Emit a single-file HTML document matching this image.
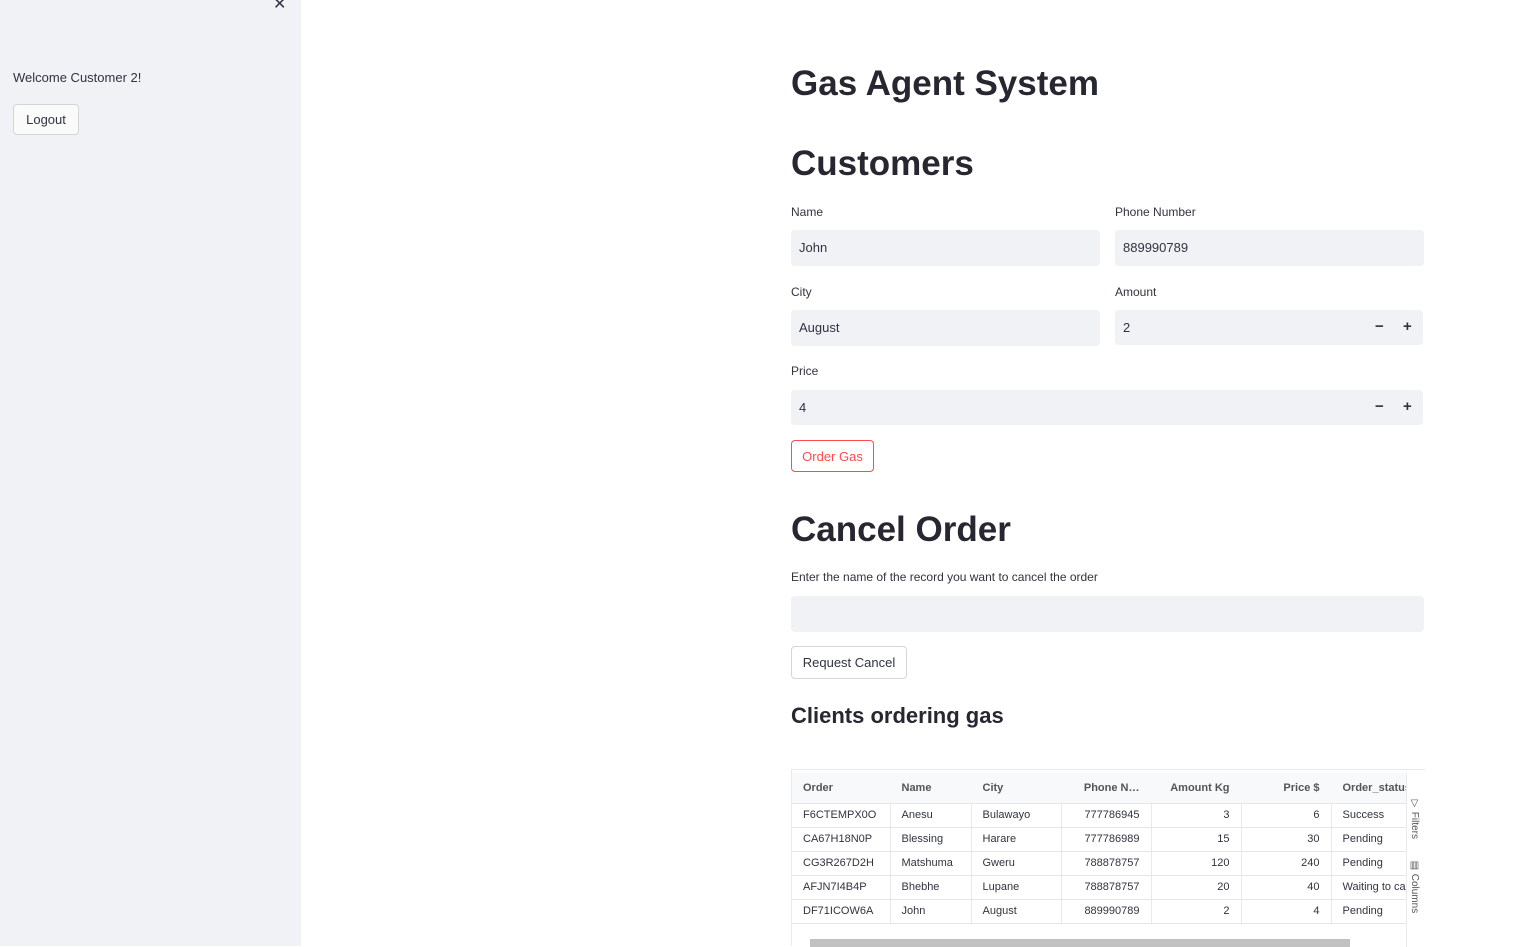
<!DOCTYPE html>
<html><head><style>
*{box-sizing:border-box;margin:0;padding:0}
body{width:1537px;height:946px;overflow:hidden;background:#fff;font-family:"Liberation Sans",sans-serif;color:#31333f;position:relative}
.side{position:absolute;left:0;top:0;width:301px;height:946px;background:#f0f2f6}
.abs{position:absolute}
.h1{font-weight:700;font-size:35px;color:#262730}
.lbl{font-size:12px;color:#31333f}
.inp{position:absolute;background:#f0f2f6;border-radius:4px;height:36px;font-size:13px;padding:10px 8px;color:#31333f}
.btn{position:absolute;border:1px solid #d5d6da;border-radius:4px;background:#fff;font-size:13px;display:flex;align-items:center;justify-content:center}
.pm{position:absolute;font-size:15px;font-weight:700;color:#31333f}
table{border-collapse:collapse;font-size:11px;table-layout:fixed}
td,th{height:24px;padding:0 11px;border-right:1px solid #e8e9ec;border-bottom:1px solid #e4e6ea;white-space:nowrap;overflow:hidden;color:#31333f}
th{height:30px;background:#f8f9fb;font-weight:700;text-align:left;color:#555;border-right:1px solid #f8f9fb}
.r{text-align:right}
</style></head><body>
<div class="side">
 <div class="abs" style="left:273px;top:-6px;font-size:16px">✕</div>
 <div class="abs" style="left:13px;top:70px;font-size:13px">Welcome Customer 2!</div>
 <div class="btn" style="left:13px;top:104px;width:66px;height:31px;background:#fafafa">Logout</div>
</div>
<div class="abs h1" style="left:791px;top:64px">Gas Agent System</div>
<div class="abs h1" style="left:791px;top:144px">Customers</div>
<div class="abs lbl" style="left:791px;top:205px">Name</div>
<div class="abs lbl" style="left:1115px;top:205px">Phone Number</div>
<div class="inp" style="left:791px;top:230px;width:309px">John</div>
<div class="inp" style="left:1115px;top:230px;width:309px">889990789</div>
<div class="abs lbl" style="left:791px;top:285px">City</div>
<div class="abs lbl" style="left:1115px;top:285px">Amount</div>
<div class="inp" style="left:791px;top:310px;width:309px">August</div>
<div class="inp" style="left:1115px;top:310px;width:308px;height:35px">2</div>
<div class="pm" style="left:1375px;top:318px">−</div><div class="pm" style="left:1403px;top:318px">+</div>
<div class="abs lbl" style="left:791px;top:364px">Price</div>
<div class="inp" style="left:791px;top:390px;width:632px;height:35px">4</div>
<div class="pm" style="left:1375px;top:398px">−</div><div class="pm" style="left:1403px;top:398px">+</div>
<div class="btn" style="left:791px;top:440px;width:83px;height:32px;border-color:#ff4b4b;color:#ff4b4b">Order Gas</div>
<div class="abs h1" style="left:791px;top:510px">Cancel Order</div>
<div class="abs lbl" style="left:791px;top:570px">Enter the name of the record you want to cancel the order</div>
<div class="inp" style="left:791px;top:596px;width:633px"></div>
<div class="btn" style="left:791px;top:646px;width:116px;height:33px">Request Cancel</div>
<div class="abs" style="left:791px;top:703px;font-size:22px;font-weight:700;color:#262730">Clients ordering gas</div>
<div class="abs" style="left:791px;top:769px;width:634px;height:177px;border-top:1px solid #e8e9ec;border-left:1px solid #e8e9ec">
<table style="position:absolute;left:0;top:3px;width:614px">
<colgroup><col style="width:98px"><col style="width:81px"><col style="width:90px"><col style="width:90px"><col style="width:90px"><col style="width:90px"><col style="width:75px"></colgroup>
<tr><th>Order</th><th>Name</th><th>City</th><th class="r">Phone N…</th><th class="r">Amount Kg</th><th class="r">Price $</th><th>Order_status</th></tr>
<tr><td>F6CTEMPX0O</td><td>Anesu</td><td>Bulawayo</td><td class="r">777786945</td><td class="r">3</td><td class="r">6</td><td>Success</td></tr>
<tr><td>CA67H18N0P</td><td>Blessing</td><td>Harare</td><td class="r">777786989</td><td class="r">15</td><td class="r">30</td><td>Pending</td></tr>
<tr><td>CG3R267D2H</td><td>Matshuma</td><td>Gweru</td><td class="r">788878757</td><td class="r">120</td><td class="r">240</td><td>Pending</td></tr>
<tr><td>AFJN7I4B4P</td><td>Bhebhe</td><td>Lupane</td><td class="r">788878757</td><td class="r">20</td><td class="r">40</td><td>Waiting to cancel</td></tr>
<tr><td>DF71ICOW6A</td><td>John</td><td>August</td><td class="r">889990789</td><td class="r">2</td><td class="r">4</td><td>Pending</td></tr>
</table>
<div class="abs" style="left:614px;top:3px;width:20px;height:174px;background:#fff;border-left:1px solid #e8e9ec"></div>
<div class="abs" style="left:617px;top:28px;font-size:10px;color:#555;writing-mode:vertical-rl">▽ Filters</div>
<div class="abs" style="left:617px;top:90px;font-size:10px;color:#555;writing-mode:vertical-rl">▥ Columns</div>
<div class="abs" style="left:18px;top:169px;width:540px;height:8px;background:#c1c1c1"></div>
</div>
</body></html>
